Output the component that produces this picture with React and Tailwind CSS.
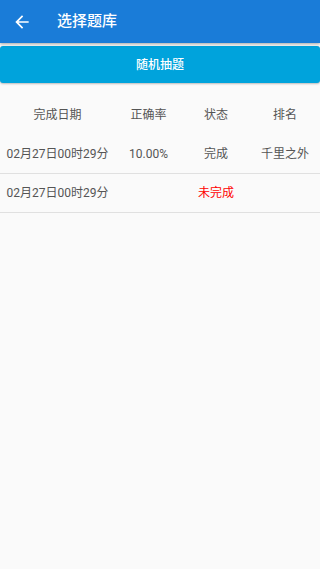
import React from "react";

const font = { fontFamily: 'Roboto, "Noto Sans CJK SC", sans-serif' };

export default function App() {
  return (
    <div className="w-[320px] h-[569px] bg-[#fafafa] flex flex-col" style={font}>
      <div className="h-[43px] bg-[#1a7cd8] flex items-center shadow-[0_1px_3px_rgba(0,0,0,0.35)] relative z-10">
        <div className="w-[44px] flex justify-center">
          <svg width="20" height="20" viewBox="0 0 24 24" fill="white">
            <path d="M20 11H7.83l5.59-5.59L12 4l-8 8 8 8 1.41-1.41L7.83 13H20v-2z" />
          </svg>
        </div>
        <div className="ml-[13px] text-white text-[15px] font-medium">选择题库</div>
      </div>
      <div className="pt-[3px]">
        <div className="h-[37px] bg-[#00a3dc] rounded-[3px] flex items-center justify-center text-white text-[12px] font-medium shadow-[0_1px_2px_rgba(0,0,0,0.25)]">
          随机抽题
        </div>
      </div>
      <div className="mt-[13px] text-[12px] text-[#555]">
        <div className="h-[38px] flex items-center">
          <div className="w-[115px] text-center">完成日期</div>
          <div className="w-[67px] text-center">正确率</div>
          <div className="w-[68px] text-center">状态</div>
          <div className="w-[70px] text-center">排名</div>
        </div>
        <div className="h-[40px] flex items-center border-b border-[#e0e0e0]">
          <div className="w-[115px] text-center">02月27日00时29分</div>
          <div className="w-[67px] text-center">10.00%</div>
          <div className="w-[68px] text-center">完成</div>
          <div className="w-[70px] text-center">千里之外</div>
        </div>
        <div className="h-[39px] flex items-center border-b border-[#e0e0e0]">
          <div className="w-[115px] text-center">02月27日00时29分</div>
          <div className="w-[67px] text-center"></div>
          <div className="w-[68px] text-center text-[#f00]">未完成</div>
          <div className="w-[70px] text-center"></div>
        </div>
      </div>
    </div>
  );
}
